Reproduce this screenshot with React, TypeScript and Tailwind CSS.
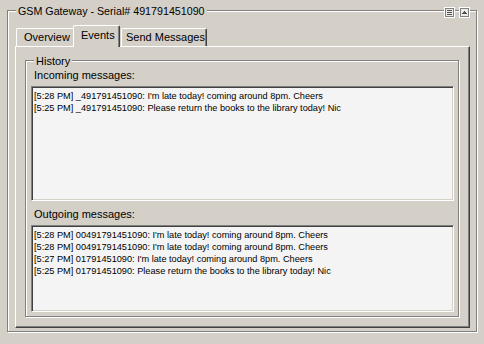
import React from "react";

const incoming = [
  "[5:28 PM] _491791451090: I'm late today! coming around 8pm. Cheers",
  "[5:25 PM] _491791451090: Please return the books to the library today! Nic",
];

const outgoing = [
  "[5:28 PM] 00491791451090: I'm late today! coming around 8pm. Cheers",
  "[5:28 PM] 00491791451090: I'm late today! coming around 8pm. Cheers",
  "[5:27 PM] 01791451090: I'm late today! coming around 8pm. Cheers",
  "[5:25 PM] 01791451090: Please return the books to the library today! Nic",
];

function MenuIcon() {
  return (
    <svg width="11" height="11" viewBox="0 0 11 11" shapeRendering="crispEdges">
      <rect x="0" y="0" width="11" height="11" fill="#ffffff" />
      <rect x="1" y="1" width="9" height="9" fill="#808080" />
      <rect x="2" y="2" width="7" height="7" fill="#eeece8" />
      <rect x="3" y="3" width="5" height="1" fill="#505050" />
      <rect x="3" y="5" width="5" height="1" fill="#505050" />
      <rect x="3" y="7" width="5" height="1" fill="#505050" />
    </svg>
  );
}

function UpIcon() {
  return (
    <svg width="11" height="11" viewBox="0 0 11 11" shapeRendering="crispEdges">
      <rect x="0" y="0" width="11" height="11" fill="#ffffff" />
      <rect x="1" y="1" width="9" height="9" fill="#808080" />
      <rect x="2" y="2" width="7" height="7" fill="#eeece8" />
      <rect x="5" y="4" width="1" height="1" fill="#505050" />
      <rect x="4" y="5" width="3" height="1" fill="#505050" />
      <rect x="3" y="6" width="5" height="1" fill="#505050" />
    </svg>
  );
}

function ListBox({ lines, h }: { lines: string[]; h: string }) {
  return (
    <div
      className={`w-[423px] ${h} bg-[#f4f4f4] border border-t-[#808080] border-l-[#808080] border-r-white border-b-white shadow-[inset_1px_1px_0_#404040,inset_-1px_-1px_0_#d4d0c8] pt-[3px] pl-[2px] text-[9.2px] leading-[12px] overflow-hidden`}
    >
      {lines.map((l, i) => (
        <div key={i} className="whitespace-nowrap">
          {l}
        </div>
      ))}
    </div>
  );
}

export default function App() {
  return (
    <div className="w-[484px] h-[344px] bg-[#d4d0c8] pt-[10px] pl-[7px] font-['Liberation_Sans',Arial,sans-serif] text-[11px] leading-[13px] text-black overflow-hidden">
      <div className="relative w-[470px] h-[322px] border border-[#808080] shadow-[inset_1px_1px_0_#fff,1px_1px_0_#fff] pt-[14px] pl-[7px]">
        <span className="absolute left-[8px] top-[-6px] px-[2px] bg-[#d4d0c8] whitespace-nowrap text-[10.7px]">
          GSM Gateway - Serial# 491791451090
        </span>
        <div className="absolute left-[436px] top-[-4px] flex gap-[4px]">
          <MenuIcon />
          <UpIcon />
        </div>

        <div className="flex items-end h-[21px] pl-[1px]">
          <div className="h-[18px] w-[57px] border-l border-t border-white rounded-tl-[2px] pl-[7px] pt-[2px] whitespace-nowrap">
            Overview
          </div>
          <div className="relative z-10 h-[22px] -mb-px w-[47px] bg-[#d4d0c8] border-l border-t border-r border-l-white border-t-white border-r-[#404040] rounded-t-[2px] shadow-[inset_-1px_0_0_#808080] pl-[7px] pt-[3px] whitespace-nowrap">
            Events
          </div>
          <div className="ml-[1px] h-[18px] w-[86px] border-l border-t border-r border-l-white border-t-white border-r-[#404040] rounded-t-[2px] shadow-[inset_-1px_0_0_#808080] pl-[4px] pt-[2px] whitespace-nowrap">
            Send Messages
          </div>
        </div>

        <div className="w-[455px] h-[282px] border border-t-white border-l-white border-r-[#404040] border-b-[#404040] shadow-[inset_-1px_-1px_0_#808080] pt-[13px] pl-[9px]">
          <div className="relative w-[434px] h-[257px] border border-[#808080] shadow-[inset_1px_1px_0_#fff,1px_1px_0_#fff] pl-[5px] pt-[8px]">
            <span className="absolute left-[8px] top-[-6px] px-[2px] bg-[#d4d0c8] whitespace-nowrap">
              History
            </span>
            <div className="pl-[3px] whitespace-nowrap">Incoming messages:</div>
            <div className="mt-[4px]">
              <ListBox lines={incoming} h="h-[115px]" />
            </div>
            <div className="mt-[7px] pl-[3px] whitespace-nowrap">Outgoing messages:</div>
            <div className="mt-[4px]">
              <ListBox lines={outgoing} h="h-[87px]" />
            </div>
          </div>
        </div>
      </div>
    </div>
  );
}
